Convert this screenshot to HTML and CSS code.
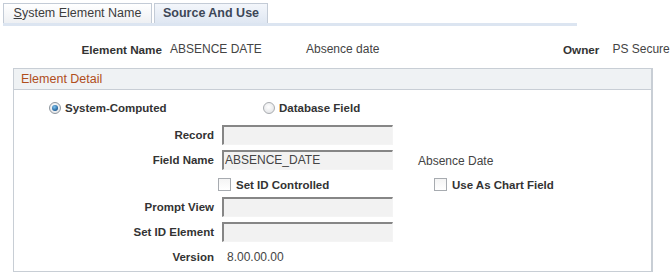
FILE: index.html
```html
<!DOCTYPE html>
<html>
<head>
<meta charset="utf-8">
<link rel="stylesheet" href="styles.css">
</head>
<body>
<div class="page">
  <div class="tabs">
    <div class="tab tab-off"><span class="ul">S</span>ystem Element Name</div>
    <div class="tab tab-on">Source And Use</div>
  </div>
  <div class="tabline"></div>

  <div class="hdr">
    <div class="hl w1">Element Name</div>
    <div class="hv w2">ABSENCE DATE</div>
    <div class="hv w3">Absence date</div>
    <div class="hl">Owner</div>
    <div class="hv owner">PS Secure</div>
  </div>

  <div class="box">
    <div class="box-head">Element Detail</div>
    <div class="box-body">
      <div class="radios">
        <div class="radio-item r1"><span class="radio checked"></span><span class="lbl">System-Computed</span></div>
        <div class="radio-item"><span class="radio"></span><span class="lbl">Database Field</span></div>
      </div>

      <div class="grid">
        <div class="fl">Record</div>
        <div class="fc"><div class="inp"></div></div>
        <div class="fx"></div>

        <div class="fl">Field Name</div>
        <div class="fc"><div class="inp">ABSENCE_DATE</div></div>
        <div class="fx"><span class="desc">Absence Date</span></div>

        <div class="fl"></div>
        <div class="fc chkrow"><span class="chk"></span><span class="lbl">Set ID Controlled</span></div>
        <div class="fx chkrow"><span class="chk chk2"></span><span class="lbl">Use As Chart Field</span></div>

        <div class="fl">Prompt View</div>
        <div class="fc"><div class="inp"></div></div>
        <div class="fx"></div>

        <div class="fl">Set ID Element</div>
        <div class="fc"><div class="inp"></div></div>
        <div class="fx"></div>

        <div class="fl vrow">Version</div>
        <div class="fc vrow"><span class="vval">8.00.00.00</span></div>
        <div class="fx vrow"></div>
      </div>
    </div>
  </div>
</div>
</body>
</html>
```

FILE: styles.css
```css
html, body {
  margin: 0;
  padding: 0;
  background: #ffffff;
  overflow: hidden;
}
body {
  font-family: "Liberation Sans", Arial, sans-serif;
  font-size: 12px;
  color: #333333;
}
.page {
  width: 671px;
  height: 277px;
  padding-top: 3px;
  box-sizing: border-box;
  overflow: hidden;
}
.tabs {
  display: flex;
  gap: 2px;
  margin-left: 3px;
  height: 20px;
}
.tab {
  box-sizing: border-box;
  height: 20px;
  line-height: 19px;
  border: 1px solid #c3cbd6;
  border-bottom: none;
  text-align: center;
  font-size: 12.5px;
}
.tab-off {
  width: 149px;
  color: #3c3c3c;
  background: linear-gradient(#ffffff, #eef0f3);
}
.tab-off .ul {
  text-decoration: underline;
}
.tab-on {
  width: 114px;
  font-weight: bold;
  color: #3d4757;
  background: linear-gradient(#f3f6fb, #dfe7f2);
}
.tabline {
  margin-left: 3px;
  width: 574px;
  height: 3px;
  background: #dce5f1;
}
.hdr {
  display: flex;
  align-items: center;
  margin-top: 15px;
  height: 16px;
  white-space: nowrap;
}
.hl {
  font-weight: bold;
  font-size: 11.7px;
  color: #333333;
  text-align: right;
}
.hv {
  color: #444444;
}
.w1 { width: 162px; }
.w2 { width: 136px; margin-left: 8px; }
.w3 { width: 257px; }
.owner { margin-left: 13px; }

.box {
  margin-top: 11px;
  margin-left: 13px;
  width: 640px;
  height: 204px;
  box-sizing: border-box;
  border: 1px solid #c8ced5;
  border-right-width: 2px;
}
.box-head {
  height: 21px;
  line-height: 20px;
  box-sizing: border-box;
  background: #eff2f4;
  border-bottom: 1px solid #c8ced5;
  padding-left: 7px;
  color: #b04e1c;
  font-size: 12.5px;
}
.box-body {
  padding-top: 10px;
}
.radios {
  display: flex;
  align-items: center;
  height: 16px;
  padding-left: 35px;
}
.radio-item {
  display: flex;
  align-items: center;
  gap: 4px;
}
.r1 { width: 214px; }
.radio {
  width: 12px;
  height: 12px;
  box-sizing: border-box;
  border-radius: 50%;
  border: 1px solid #a9acb0;
  background: radial-gradient(circle at 45% 40%, #ffffff, #dcdee1);
  position: relative;
}
.radio.checked {
  border-color: #8e969e;
}
.radio.checked::after {
  content: "";
  position: absolute;
  left: 2px;
  top: 2px;
  width: 6px;
  height: 6px;
  border-radius: 50%;
  background: radial-gradient(circle at 40% 35%, #7fc4f0, #1f5f98 70%, #173e66);
}
.lbl {
  font-weight: bold;
  font-size: 11.5px;
  color: #333333;
}
.grid {
  display: grid;
  grid-template-columns: 204px 196px 1fr;
  grid-template-rows: 25px 25px 22px 25px 25px 24px;
  margin-top: 9px;
}
.fl {
  font-weight: bold;
  font-size: 11.5px;
  text-align: right;
  padding-right: 4px;
  height: 20px;
  line-height: 20px;
  color: #333333;
}
.fc {
  height: 20px;
}
.inp {
  margin-left: 4px;
  width: 171px;
  height: 20px;
  box-sizing: border-box;
  background: #f2f2f2;
  border-top: 2px solid #868686;
  border-left: 2px solid #868686;
  border-right: 1px solid #f4f4f4;
  border-bottom: 1px solid #f4f4f4;
  line-height: 17px;
  padding-left: 1px;
  color: #444444;
}
.fx {
  padding-left: 4px;
}
.desc {
  display: inline-block;
  line-height: 22px;
  color: #444444;
}
.chkrow {
  display: flex;
  align-items: center;
  gap: 5px;
  height: 19px;
}
.chk {
  width: 13px;
  height: 13px;
  box-sizing: border-box;
  border: 1px solid #a7abb0;
  background: linear-gradient(#f4f4f4, #ffffff);
}
.chk2 {
  margin-left: 16px;
}
.vrow {
  height: 24px;
  line-height: 24px;
  margin-top: -2px;
}
.vval {
  margin-left: 9px;
  color: #444444;
}
```
